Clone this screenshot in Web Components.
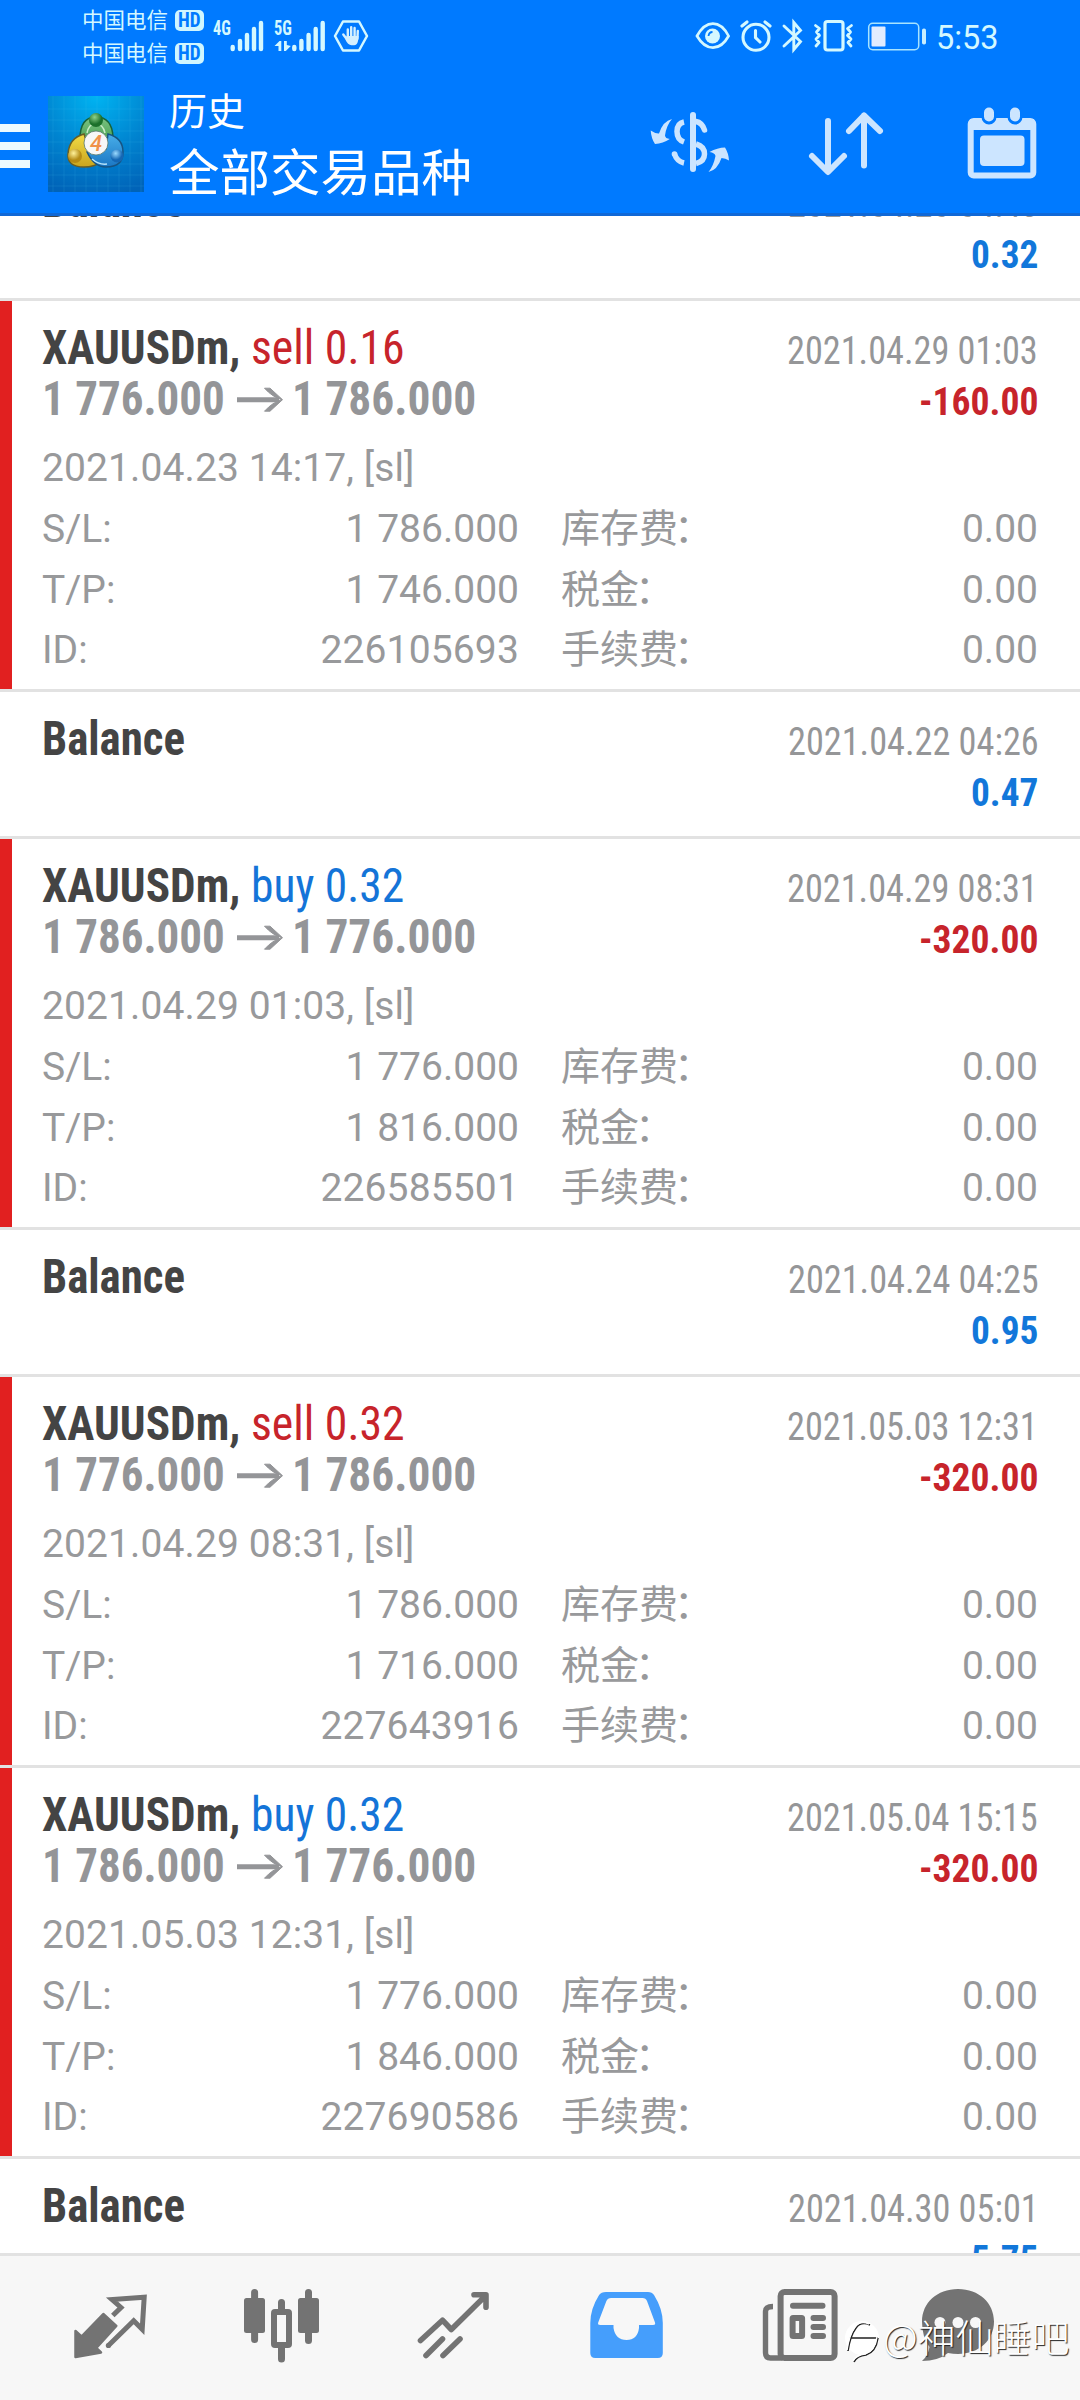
<!DOCTYPE html>
<html lang="zh-CN">
<head>
<meta charset="utf-8">
<title>历史</title>
<style>
html,body{margin:0;padding:0;background:#fff}
body{width:1080px;height:2400px;overflow:hidden;font-family:Roboto,"Noto Sans CJK SC",sans-serif}
</style>
</head>
<body>
<history-app></history-app>
<script>
const ICONS = {
  signal4: ['230 18 34 36', '<g stroke="#d4f8ff" stroke-width="4.4" stroke-linecap="round"><path d="M232.7 47v2M240 41v8M247 35v14M254 29v20M261 23v26"/></g>'],
  signal5: ['274 18 52 36', '<g stroke="#d4f8ff" stroke-width="4.4" stroke-linecap="round"><path d="M294.3 47v2M301.4 41v8M308.6 35v14M315.7 29v20M322.7 23v26"/></g><path d="M274.5 46l5-5h1.800v10h-2.800v-5zM284 41h2.800v4l4 1-5 5h-1.800z" fill="#d4f8ff"/>'],
  hand: ['333 18 36 36', '<path d="M343 21.500h16l8 14.500-8 14.500h-16l-8-14.500z" fill="none" stroke="#d4f8ff" stroke-width="2.500" stroke-linejoin="round"/><g stroke="#d4f0ff" stroke-linecap="round" stroke-width="2.400"><path d="M347.800 29.500v9M351.200 27.200v10M354.600 28v10M357.800 31l-.4 8M343.300 34.500l4.500 6"/></g><path d="M346.600 36h12l-.6 5c-.6 3-2 4.300-4 4.300h-2.500c-2.500 0-4.500-2.500-6-5.500z" fill="#d4f0ff"/>'],
  eye: ['695 18 36 36', '<path d="M697 36C706 19.500 720 19.500 728.600 36 720 51.500 706 51.500 697 36z" fill="none" stroke="#d4f8ff" stroke-width="2.700"/><circle cx="712.500" cy="36" r="7.500" fill="#d4f8ff"/><path d="M708.500 36q.5-4 4-4" fill="none" stroke="#007aff" stroke-width="1.800"/>'],
  alarm: ['740 18 34 36', '<g fill="none" stroke="#d4f8ff" stroke-width="3.100" stroke-linecap="round"><circle cx="756" cy="37.300" r="13"/><path d="M742 26l5-4M765 22l5 4M755.500 30.500v7l4.500 4.500"/></g>'],
  bluetooth: ['781 18 24 36', '<path d="M784 26l16.500 15.500-6.700 8v-27l6.700 8L784 46" fill="none" stroke="#d4f8ff" stroke-width="2.900" stroke-linecap="round" stroke-linejoin="miter"/>'],
  vibrate: ['812 18 43 36', '<g fill="none" stroke="#d4f8ff" stroke-linecap="round" stroke-linejoin="round"><rect x="825" y="21.500" width="18" height="28.500" rx="2.500" stroke-width="3.200"/><path d="M815.500 25.500l4 3-3 3.500 3 3.500-3.500 3.500 3 3.500-3 3.500M851.500 25.500l-4 3 3 3.500-3 3.500 3.500 3.500-3 3.500 3 3.500" stroke-width="2.800"/></g>'],
  battery: ['867 18 60 36', '<rect x="868.700" y="23.300" width="50" height="26.400" rx="4" fill="none" stroke="#a8e4ff" stroke-width="1.500"/><rect x="871.500" y="26.500" width="14" height="20" rx="1" fill="#e1ecff"/><rect x="922" y="28.500" width="4" height="16" rx="1.800" fill="#c8eeff"/>'],
  dollar: ['650 106 82 72', '<g fill="none" stroke="#cce5ff" stroke-width="5.500"><path d="M693 115v54" stroke-linecap="round" stroke-width="6"/><path d="M684 122q-7 1.500-7 9.500t7 10.500"/><path d="M674.500 154q2.500 7.500 9.500 9" /><path d="M696 121.500q6 1 8.500 8.500" stroke-linecap="round"/><path d="M696 144q8.500 2.500 8.500 10t-8.500 9.500"/></g><circle cx="674.500" cy="154" r="2.800" fill="#cce5ff"/><path d="M672 119q-9 2-13 14.500-3.500.3-8.300-3 .5 8 4.300 13.500 8-.5 14.800-5-4.500-.5-4.800-3.500 1.500-10.500 7-16.500zM708.500 172q9-2 13-14 4 .3 7.500 2.500-.5-7.500-4-13-7.500 0-15.500 4.500 5.500.8 6 4-2 10-7 16z" fill="#cce5ff"/>'],
  sort: ['807 108 80 70', '<g fill="none" stroke="#cce5ff" stroke-width="6" stroke-linecap="round" stroke-linejoin="round"><path d="M828 121v50M812 156l16 16 16-16M864 165.500v-50M849 131l15-15.500L880 131"/></g>'],
  calendar: ['966 104 72 78', '<rect x="970.700" y="121" width="62.600" height="54.500" rx="3" fill="none" stroke="#cce5ff" stroke-width="6"/><rect x="980" y="135.500" width="44.500" height="30.500" rx="4" fill="#cce5ff"/><path d="M970 119h64v11h-64z" fill="#cce5ff"/><g stroke-linecap="round"><path d="M989 112v5M1015 112v5" stroke="#007aff" stroke-width="15"/><path d="M989 112.500v4M1015 112.500v4" stroke="#cce5ff" stroke-width="10"/></g>'],
  quotes: ['72 2285 78 80', '<path d="M103.300 2314l13 12-20 22 4.700 4.500-25.500 4.500v-26l6 5.500z" fill="#737373" stroke="#737373" stroke-width="2.500" stroke-linejoin="round"/><path d="M112.800 2315.500l8.200-8-9-8 32.200-2.300-2 32-8.500-8.500-25.500 25" fill="none" stroke="#737373" stroke-width="5"/><circle cx="108.400" cy="2345.500" r="2.600" fill="#737373"/>'],
  candles: ['242 2285 80 80', '<g stroke="#737373" stroke-width="7" stroke-linecap="round"><path d="M254.600 2292.500v47M308.500 2292.500v48M281.500 2302.500v8M281.500 2346v13"/></g><g fill="#737373"><rect x="244" y="2298" width="21" height="35" rx="2.500"/><rect x="298" y="2298" width="21" height="35" rx="2.500"/></g><rect x="274" y="2312" width="15" height="33" rx="1" fill="#f7f7f7" stroke="#737373" stroke-width="6"/>'],
  trend: ['415 2285 80 80', '<g fill="none" stroke="#737373" stroke-width="5.600" stroke-linecap="round" stroke-linejoin="round"><path d="M420.500 2340.500l22-20.300 8.800 9.300 34.500-34M474 2294.700h12v12.500M426 2355.500l16.500-16.500M443 2355.500l17-16.500"/></g>'],
  inbox: ['588 2285 78 80', '<path fill-rule="evenodd" d="M606 2292h42q4 0 6 3 8.800 14 8.800 28v30q0 5-5 5h-62.500q-5 0-5-5v-30q0-14 8.800-28 2-3 6.900-3zM611 2298q-3.300 0-4.600 3l-8.200 21.500q-.8 2.500 2 2.500h13.300v3q2 12 13 12t12.500-12v-3h14q2.800 0 2-2.500l-8-21.500q-1.200-3-4.500-3z" fill="#459efc"/>'],
  news: ['760 2285 80 80', '<g fill="none" stroke="#737373"><rect x="780.600" y="2292" width="54" height="66" rx="4" stroke-width="6"/><path d="M773 2306.500q-7.500 0-7.500 5v41q0 5.500 5 5.500h12" stroke-width="5.400"/><path d="M793 2305.700h29.500M813.500 2318h9.500M813.500 2327h9.500M813.500 2336h9.500" stroke-width="6" stroke-linecap="round"/><rect x="792.600" y="2318" width="9.500" height="18" rx=".5" stroke-width="6"/></g>'],
  chat: ['918 2285 80 80', '<path d="M958 2289c21 0 36 14 36 32.500s-15 32.500-36 32.500q-5 0-10-1-10 8-26 8 6-5 7.500-14-7.500-10-7.500-25.500c0-18.500 15-32.500 36-32.500z" fill="#737373"/><g fill="#f7f7f7"><circle cx="940" cy="2322.500" r="5.500"/><circle cx="958" cy="2322.500" r="5.500"/><circle cx="975.500" cy="2322.500" r="5.500"/></g>'],
  arrow: ['236 380 48 34', '<path d="M237 397.700h42" stroke="#949598" stroke-width="5"/><path d="M264.500 386.200q8 9 17.500 11.500-9.500 2.500-17.500 11.500h5.500l12.500-11.500-12.500-11.500z" fill="#949598" stroke="#949598" stroke-width="1"/>'],
  stamp: ['843 2318 40 50', '<circle cx="862" cy="2338" r="17" fill="#fff"/><g fill="none"><path d="M848 2351q2-15 8-23 5-7 14-3M849 2338h29M878 2338q-2 14-12 17-9 1-12 7" stroke="#222" stroke-width="1.600"/><path d="M847 2350q2-15 8-23 5-7 14-3M877 2337q-2 14-12 17-9 1-12 7" stroke="#fff" stroke-width="1.500"/></g>'],
  logo: ['48 96 96 96', `<defs>
    <radialGradient id="bg" cx=".5" cy="0" r="1.050"><stop offset="0" stop-color="#00b4f2"/><stop offset=".55" stop-color="#0084d0"/><stop offset="1" stop-color="#0063b8"/></radialGradient>
    <linearGradient id="g" x2="0" y2="1"><stop offset="0" stop-color="#7cc383"/><stop offset="1" stop-color="#2c8c35"/></linearGradient>
    <linearGradient id="y" x2="0" y2="1"><stop offset="0" stop-color="#f3dc45"/><stop offset="1" stop-color="#c8a41f"/></linearGradient>
    <linearGradient id="b" x2="0" y2="1"><stop offset="0" stop-color="#48aee9"/><stop offset="1" stop-color="#1b77c4"/></linearGradient>
    <radialGradient id="gs" cx=".4" cy=".3"><stop offset="0" stop-color="#8ed28b"/><stop offset="1" stop-color="#1c702b"/></radialGradient>
    <radialGradient id="ys" cx=".4" cy=".3"><stop offset="0" stop-color="#fff29a"/><stop offset="1" stop-color="#b58c15"/></radialGradient>
    <radialGradient id="bs" cx=".4" cy=".3"><stop offset="0" stop-color="#9adaff"/><stop offset="1" stop-color="#1467b4"/></radialGradient></defs>
    <path d="M48 96h96v96H48z" fill="url(#bg)"/>
    <path d="M53 96v96M64 96v96M75 96v96M86 96v96M97 96v96M108 96v96M119 96v96M130 96v96M141 96v96M48 109h96M48 120h96M48 131h96M48 142h96M48 153h96M48 164h96M48 175h96M48 186h96" stroke="#4fc3f2" stroke-opacity=".14"/>
    <path d="M80 139q0-22 16-22t17 20l-1 19q-8-8-14-8t-13 5z" fill="url(#g)" stroke="#17633a" stroke-width="1.500"/>
    <path d="M87 133q2-10 9-9 7 0 9 9" fill="none" stroke="#c9ecc7" stroke-width="1.500"/>
    <path d="M84 134q-15 4-16 20-1 13 16 13 11 0 16-5-10-8-11-13z" fill="url(#y)" stroke="#675e25" stroke-width="1.500"/>
    <path d="M108 134q15 4 15 18 0 15-17 15-12 0-19-15l19-3z" fill="url(#b)" stroke="#175483" stroke-width="1.500"/>
    <path d="M92 159q7 6 15 5" fill="none" stroke="#b8e5fc" stroke-width="1.500"/>
    <circle cx="96" cy="120" r="7" fill="url(#gs)"/><circle cx="75" cy="156" r="7" fill="url(#ys)"/><circle cx="117" cy="156" r="6.500" fill="url(#bs)"/>
    <circle cx="96" cy="143" r="12" fill="#f7f7f7" stroke="#58786b" stroke-width=".8"/>
    <text x="96" y="151" text-anchor="middle" font-family="Roboto" font-size="22" font-weight="500" font-style="italic" fill="#f0914a">4</text>`]
};

function define(name, html, after) {
  const t = document.createElement('template');
  t.innerHTML = html;
  customElements.define(name, class extends HTMLElement {
    connectedCallback() {
      if (this.shadowRoot) return;
      this.attachShadow({mode: 'open'}).append(t.content.cloneNode(true));
      if (after) after(this, this.shadowRoot);
    }
  });
}

define('ui-icon', '<style>:host{display:block;flex:none}svg{display:block}</style><svg></svg>', (el, root) => {
  const [box, body] = ICONS[el.getAttribute('name')];
  const [, , w, h] = box.split(' ');
  const svg = root.querySelector('svg');
  svg.setAttribute('viewBox', box);
  svg.setAttribute('width', w);
  svg.setAttribute('height', h);
  svg.innerHTML = body;
});

/* One line of condensed text that always fills the given advance width. */
define('fit-text', `<style>:host{display:block;flex:none;white-space:nowrap;font-family:"Roboto Condensed",Roboto,"Noto Sans CJK SC",sans-serif;font-stretch:75%}
span{display:inline-block;transform-origin:0 0}</style><span><slot></slot></span>`, (el, root) => {
  const span = root.querySelector('span'), w = +el.getAttribute('w');
  span.style.transform = `scaleX(${w / span.offsetWidth})`;
  el.style.width = w + 'px';
});

define('status-bar', `<style>
:host{display:flex;height:72px;color:#d4f8ff}
.carriers{margin-left:82px;padding-top:3px;width:122px;display:flex;flex-direction:column}
.c{display:flex;align-items:flex-start;justify-content:space-between;height:33px;font:21.500px/33px "Noto Sans CJK SC",sans-serif}
.c>span{margin-top:-1px}
.hd{width:29px;height:21px;margin-top:7px;border-radius:5px;background:#d0f6ff;color:#007aff;font:700 20px/21px Roboto,sans-serif;display:flex;justify-content:center}
ui-icon{margin-top:18px}
.net{font-weight:700;font-size:20px;line-height:20px;margin-top:18px}
.time{font:34px/36px Roboto,sans-serif;margin:19px 0 0 9px}
</style>
<div class="carriers"><div class="c"><span>中国电信</span><div class="hd"><fit-text w="23">HD</fit-text></div></div><div class="c"><span>中国电信</span><div class="hd"><fit-text w="23">HD</fit-text></div></div></div>
<fit-text class="net" w="18" style="margin-left:9px">4G</fit-text>
<ui-icon name="signal4" style="margin-left:-1px"></ui-icon>
<fit-text class="net" w="18" style="margin-left:10px">5G</fit-text>
<ui-icon name="signal5" style="margin-left:-18px"></ui-icon>
<ui-icon name="hand" style="margin-left:7px"></ui-icon>
<ui-icon name="eye" style="margin-left:326px"></ui-icon>
<ui-icon name="alarm" style="margin-left:9px"></ui-icon>
<ui-icon name="bluetooth" style="margin-left:7px"></ui-icon>
<ui-icon name="vibrate" style="margin-left:7px"></ui-icon>
<ui-icon name="battery" style="margin-left:12px"></ui-icon>
<fit-text class="time" w="63">5:53</fit-text>`);

define('app-bar', `<style>
:host{display:flex;height:141px;color:#fff;border-bottom:3px solid #1068d6;align-items:flex-start}
.menu{display:flex;flex-direction:column;gap:10px;width:30px;margin-top:52px}
.menu i{height:8px;background:#ecfaff}
.t{margin:17px 0 0 25px;width:481px;display:flex;flex-direction:column;font-family:"Noto Sans CJK SC",sans-serif}
.a{font-size:38px;line-height:40px}.b{font-size:50.500px;line-height:60px;margin-top:10px}
</style>
<div class="menu"><i></i><i></i><i></i></div>
<ui-icon name="logo" style="margin:24px 0 0 18px"></ui-icon>
<div class="t"><span class="a">历史</span><span class="b">全部交易品种</span></div>
<ui-icon name="dollar" style="margin-top:34px"></ui-icon>
<ui-icon name="sort" style="margin:36px 0 0 75px"></ui-icon>
<ui-icon name="calendar" style="margin:32px 0 0 79px"></ui-icon>`);

define('balance-row', `<style>
:host{display:block;box-sizing:border-box;height:147px;padding:21px 42px 0;border-bottom:3px solid #e2e2e2}
div{display:flex;justify-content:space-between;align-items:baseline;height:51px;line-height:51px}
.n{font-weight:700;font-size:48px;color:#444}.d{font-size:39px;color:#959698;margin-right:-.5px}
.p{font-weight:700;font-size:39px;color:#1277da;margin-left:auto;padding-top:4px}
</style><div><fit-text class="n" w="143">Balance</fit-text><fit-text class="d" w="251"></fit-text></div><div><fit-text class="p" w="67"></fit-text></div>`, (el, root) => {
  fill(root, '.d', el.getAttribute('date'));
  fill(root, '.p', el.getAttribute('profit'));
});

function fill(root, sel, text) {
  const el = root.querySelector(sel);
  el.textContent = text;
  const span = el.shadowRoot.querySelector('span');
  span.style.transform = 'none';
  span.style.transform = `scaleX(${+el.getAttribute('w') / span.offsetWidth})`;
}

define('trade-row', `<style>
:host{display:flex;box-sizing:border-box;height:391px;border-bottom:3px solid #e2e2e2;color:#98999b}
.bar{width:12px;background:#e12020}
.m{flex:1;padding:21px 42px 0 30px;display:flex;flex-direction:column}
.l{display:flex;align-items:baseline;height:51px;line-height:51px;font-size:48px}
.sym{font-weight:700;color:#444}.side{margin-left:11px;color:#c7242b}
:host([side^=buy]) .side{color:#1474d8}
.d{margin-left:auto;font-size:39px;color:#959698}
.pr{font-weight:700;color:#949598}
.l ui-icon{align-self:center;margin:0 8px 0 11px}
.p{margin-left:auto;font-weight:700;font-size:39px;color:#c7242b}
.o{height:61px;font-size:39px;line-height:61px;margin-top:14px;letter-spacing:.1px}
.g{display:grid;grid-template-columns:477px 477px;column-gap:42px;grid-auto-rows:60.600px;font-size:39px;line-height:61px}
.g div{display:flex;justify-content:space-between}
b{font-weight:400;margin-left:-4px}
.id{letter-spacing:.15px}
</style>
<div class="bar"></div><div class="m">
<div class="l"><fit-text class="sym" w="198"></fit-text><fit-text class="side" w="153.500"></fit-text><fit-text class="d" w="251"></fit-text></div>
<div class="l"><fit-text class="pr from" w="183"></fit-text><ui-icon name="arrow"></ui-icon><fit-text class="pr to" w="184.500"></fit-text><fit-text class="p" w="119.500"></fit-text></div>
<div class="o"></div>
<div class="g"><div><span>S/L:</span><span class="sl"></span></div><div><span>库存费<b>：</b></span><span>0.00</span></div>
<div><span>T/P:</span><span class="tp"></span></div><div><span>税金<b>：</b></span><span>0.00</span></div>
<div><span>ID:</span><span class="id"></span></div><div><span>手续费<b>：</b></span><span>0.00</span></div></div></div>`, (el, root) => {
  const a = n => el.getAttribute(n);
  fill(root, '.sym', 'XAUUSDm,');
  fill(root, '.side', a('side'));
  fill(root, '.d', a('date'));
  fill(root, '.from', a('from'));
  fill(root, '.to', a('to'));
  fill(root, '.p', a('profit'));
  root.querySelector('.o').textContent = a('opened') + ', [sl]';
  root.querySelector('.sl').textContent = a('to');
  root.querySelector('.tp').textContent = a('tp');
  root.querySelector('.id').textContent = a('number');
});

define('tab-bar', `<style>
:host{display:flex;box-sizing:border-box;height:147px;background:#f7f7f7;border-top:3px solid #e2e2e2;padding:29px 0 0 72px}
ui-icon{margin-right:93px}
[name=quotes]{margin-right:92px}[name=inbox]{margin-right:94px}[name=news]{margin-right:78px}[name=chat]{margin-right:0}
</style><ui-icon name="quotes"></ui-icon><ui-icon name="candles"></ui-icon><ui-icon name="trend"></ui-icon><ui-icon name="inbox"></ui-icon><ui-icon name="news"></ui-icon><ui-icon name="chat"></ui-icon>`);

define('user-stamp', `<style>
:host{position:absolute;left:843px;top:2313px;display:flex;width:237px}
ui-icon{margin-top:5px}
span{font:300 38px/46px "Noto Sans CJK SC",sans-serif;color:#fff;white-space:nowrap;text-shadow:1px 1px 1px #222}
</style><ui-icon name="stamp"></ui-icon><span>@神仙睡吧</span>`);

define('history-app', `<style>
:host{display:flex;flex-direction:column;position:relative;width:1080px;height:2400px;background:#fff}
header{background:#007aff;height:216px}
main{height:2037px;overflow:hidden}
.list{margin-top:-62px;display:flex;flex-direction:column}
.list>*{flex:none}
</style>
<header><status-bar></status-bar><app-bar></app-bar></header>
<main><div class="list">
<balance-row date="2021.04.20 04:43" profit="0.32"></balance-row>
<trade-row side="sell 0.16" date="2021.04.29 01:03" from="1 776.000" to="1 786.000" profit="-160.00" opened="2021.04.23 14:17" tp="1 746.000" number="226105693"></trade-row>
<balance-row date="2021.04.22 04:26" profit="0.47"></balance-row>
<trade-row side="buy 0.32" date="2021.04.29 08:31" from="1 786.000" to="1 776.000" profit="-320.00" opened="2021.04.29 01:03" tp="1 816.000" number="226585501"></trade-row>
<balance-row date="2021.04.24 04:25" profit="0.95"></balance-row>
<trade-row side="sell 0.32" date="2021.05.03 12:31" from="1 776.000" to="1 786.000" profit="-320.00" opened="2021.04.29 08:31" tp="1 716.000" number="227643916"></trade-row>
<trade-row side="buy 0.32" date="2021.05.04 15:15" from="1 786.000" to="1 776.000" profit="-320.00" opened="2021.05.03 12:31" tp="1 846.000" number="227690586"></trade-row>
<balance-row date="2021.04.30 05:01" profit="5.75"></balance-row>
</div></main>
<tab-bar></tab-bar><user-stamp></user-stamp>`);
</script>
</body>
</html>
